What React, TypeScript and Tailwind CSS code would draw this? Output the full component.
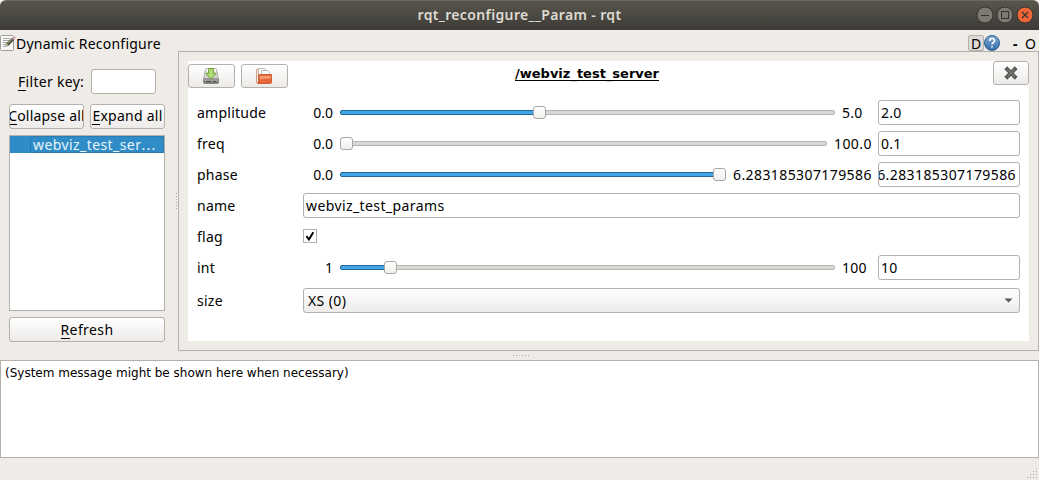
import React from "react";

const buttonFace =
  "border border-[#b4b1ac] rounded-[3px] bg-linear-to-b from-white to-[#edebe9]";

function Mnemonic({ text }: { text: string }) {
  return (
    <>
      <span className="inline-block h-[19px] border-b border-black leading-[20px]">{text[0]}</span>
      {text.slice(1)}
    </>
  );
}

function Field({ value, className = "" }: { value: string; className?: string }) {
  return (
    <div
      className={`flex h-[25px] items-center overflow-hidden rounded-[3px] border border-[#b4b1ac] bg-white whitespace-nowrap ${className}`}
    >
      {value}
    </div>
  );
}

function Slider({ percent }: { percent: number }) {
  return (
    <div className="relative flex h-[13px] min-w-0 flex-1 items-center">
      <div className="h-[5px] w-full rounded-[2px] border border-[#b6b4b1] bg-[#dad8d5]" />
      <div
        className="absolute top-[4px] left-0 h-[5px] rounded-[2px] border border-[#206b9d] bg-[#44a5e5]"
        style={{ width: `calc((100% - 13px) * ${percent / 100} + 6px)` }}
      />
      <div
        className="absolute top-0 h-[13px] w-[13px] rounded-[3px] border border-[#aaa7a3] bg-linear-to-b from-white to-[#f1efed]"
        style={{ left: `calc((100% - 13px) * ${percent / 100})` }}
      />
    </div>
  );
}

type SliderParam = { name: string; min: string; max: string; value: string; percent: number; maxClass: string; fieldClass: string };

function SliderRow({ p }: { p: SliderParam }) {
  return (
    <div className="flex h-[31px] items-center">
      <div className="w-[106px]">{p.name}</div>
      <div className="mr-[7px] w-[30px] text-right tracking-normal">{p.min}</div>
      <Slider percent={p.percent} />
      <div className={`mr-[6px] ml-[7px] whitespace-nowrap ${p.maxClass}`}>{p.max}</div>
      <Field value={p.value} className={`w-[142px] ${p.fieldClass}`} />
    </div>
  );
}

const floats: SliderParam[] = [
  { name: "amplitude", min: "0.0", max: "5.0", value: "2.0", percent: 40, maxClass: "w-[30px]", fieldClass: "pl-[2px]" },
  { name: "freq", min: "0.0", max: "100.0", value: "0.1", percent: 0, maxClass: "w-[38px] tracking-[0.4px]", fieldClass: "pl-[2px]" },
  { name: "phase", min: "0.0", max: "6.283185307179586", value: "6.283185307179586", percent: 100, maxClass: "w-[139px] tracking-[0.41px]", fieldClass: "justify-end pr-[3px] tracking-[0.41px]" },
];

function NotesIcon() {
  return (
    <svg width="16" height="16" viewBox="0 0 16 16">
      <rect x="0.5" y="0.5" width="13" height="15" rx="1" fill="#f7f7f5" stroke="#a09e9a" />
      <path d="M3 3.500h7M3 5.500h6M3 7.500h5M3 9.500h3M3 11.500h2" stroke="#a8a8a6" />
      <path d="M5.300 11.700l1-3.200 5.700-5.700 2.200 2.200-5.700 5.700z" fill="#4a4a46" />
      <path d="M5.600 11.300l.9-2.700 1.700 1.700z" fill="#e8d9a8" />
      <path d="M7.600 8.700l5-5" stroke="#b9b56a" />
      <path d="M12 3l1.200-1.300q1-.8 1.900 0t.1 1.900L14 5z" fill="#d59bbb" />
    </svg>
  );
}

function SaveIcon() {
  return (
    <svg width="16" height="16" viewBox="0 0 16 16">
      <defs>
        <linearGradient id="drive" x1="0" y1="0" x2="0" y2="1">
          <stop offset="0" stopColor="#fafaf9" />
          <stop offset="1" stopColor="#c8c8c6" />
        </linearGradient>
        <linearGradient id="driveBase" x1="0" y1="0" x2="0" y2="1">
          <stop offset="0" stopColor="#b5b6b3" />
          <stop offset="1" stopColor="#6d6e6b" />
        </linearGradient>
      </defs>
      <path d="M2.500 1.500q.2-1 1-1h9q.8 0 1 1l1.800 9.500H.7z" fill="url(#drive)" stroke="#9fa09d" strokeWidth=".8" />
      <path d="M.5 11h15v3.500q0 1-1 1h-13q-1 0-1-1z" fill="url(#driveBase)" stroke="#777875" strokeWidth=".8" />
      <path d="M3 13.500h5M10 13.500h3" stroke="#4e4f4c" />
      <path d="M5.700.5h4.600v4.800h3L8 11 2.700 5.300h3z" fill="#b4dc78" stroke="#669a22" strokeWidth=".9" />
    </svg>
  );
}

function FolderIcon() {
  return (
    <svg width="16" height="16" viewBox="0 0 16 16">
      <path d="M.5 14.500V2q0-.8.8-.8H3v13.300z" fill="#f8e6df" stroke="#cc8a72" strokeWidth=".8" />
      <path d="M2.500 13V.5h5.800l1.700 1.700V13z" fill="#fff" stroke="#a9a6a2" strokeWidth=".8" />
      <path d="M5.500 13V2.500h5.800L13.500 4.700V13z" fill="#fff" stroke="#a9a6a2" strokeWidth=".8" />
      <path d="M3.500 6.500h12V14.500q0 1-1 1H1.500q1.200-.3 1.200-1.500V7.300q0-.8.8-.8z" fill="#e9683a" stroke="#c8481c" strokeWidth=".8" />
      <path d="M3.700 8h11.200V10.500q-6 0-11.200 1z" fill="#f39a74" />
    </svg>
  );
}

function HelpIcon() {
  return (
    <span className="flex h-4 w-4 items-center justify-center rounded-full border border-[#295d8c] bg-linear-to-b from-[#7dabd6] to-[#3570a8]">
      <svg width="14" height="14" viewBox="0 0 14 14" fill="none" stroke="#fff" strokeWidth="1.6">
        <path d="M4.700 5q0-2.500 2.400-2.500T9.500 4.700q0 1.200-1.300 2Q7 7.400 7 8.500M7 9.900v1.700" />
      </svg>
    </span>
  );
}

function TitleBar() {
  return (
    <div className="bg-[#f6f5f3]">
      <div className="relative flex h-[30px] items-center justify-center rounded-t-[6px] border-t border-[#6a675c] bg-linear-to-b from-[#58564c] to-[#3c3b37] pb-px">
        <span className="font-['Noto_Sans',sans-serif] text-[14px] leading-none font-semibold tracking-[0.37px] text-[#dfdbd2]">
          rqt_reconfigure__Param - rqt
        </span>
        <svg className="absolute top-[4px] right-[4px]" width="60" height="20" viewBox="0 0 60 20">
          <g stroke="#34332f">
            <circle cx="10" cy="10" r="8" fill="#7c7a73" />
            <circle cx="30" cy="10" r="8" fill="#7c7a73" />
            <circle cx="50" cy="10" r="8" fill="#ee6538" />
          </g>
          <g fill="none" stroke="#34332f">
            <path d="M6 10.500h8" />
            <rect x="26.500" y="6.500" width="7" height="7" />
            <path d="M47 7l6 6M53 7l-6 6" strokeWidth="1.200" />
          </g>
        </svg>
      </div>
    </div>
  );
}

function Sidebar() {
  return (
    <div className="flex w-[178px] shrink-0 items-center justify-between self-stretch">
      <div className="ml-[9px] flex w-[156px] flex-col self-stretch pt-[18px] whitespace-nowrap">
        <div className="flex items-center justify-between pr-[9px] pl-[9px]">
          <span className="tracking-[0.3px]"><Mnemonic text="Filter key:" /></span>
          <Field value="" className="w-[65px]" />
        </div>
        <div className="mt-[10px] flex gap-[6px]">
          <div className={`flex h-[25px] w-[75px] items-center justify-center overflow-hidden pb-px ${buttonFace}`}>
            <span className="tracking-[0.2px]"><Mnemonic text="Collapse all" /></span>
          </div>
          <div className={`flex h-[25px] w-[75px] items-center justify-center overflow-hidden pb-px ${buttonFace}`}>
            <span className="tracking-[0.25px]"><Mnemonic text="Expand all" /></span>
          </div>
        </div>
        <div className="mt-[6px] h-[176px] border border-[#b4b1ac] bg-white">
          <div className="flex h-[17px] bg-[#308cc6] pl-[20px] text-[#e8f4fb]">
            <div className="flex flex-1 items-center rounded-[1px] border border-[#2a7bae] pl-[2px] leading-none">
              <span className="tracking-[0.42px]">webviz_test_ser</span>
              <span className="tracking-[1.3px]">...</span>
            </div>
          </div>
        </div>
        <div className={`mt-[6px] flex h-[25px] items-center justify-center ${buttonFace}`}>
          <span className="tracking-[0.4px]"><Mnemonic text="Refresh" /></span>
        </div>
      </div>
      <div className="mr-[1px] h-[16px] w-px bg-[repeating-linear-gradient(to_bottom,#aaa7a3_0_1px,transparent_1px_3px)]" />
    </div>
  );
}

function ParamPanel() {
  return (
    <div className="flex-1 border border-[#b4b1ac] p-[9px]">
      <div className="h-[280px] bg-white">
        <div className="flex h-[36px] items-start">
          <div className={`mt-[3px] flex h-[24px] w-[47px] items-center justify-center pr-px ${buttonFace}`}><SaveIcon /></div>
          <div className={`mt-[3px] ml-[6px] flex h-[24px] w-[47px] items-center justify-center pr-px ${buttonFace}`}><FolderIcon /></div>
          <div className="ml-[227px] flex flex-1 pt-[5px]">
            <span className="h-[15px] border-b border-black font-['DejaVu_Sans',sans-serif] text-[13px] leading-[15px] font-bold">
              /webviz_test_server
            </span>
          </div>
          <div className={`flex h-[24px] w-[36px] items-center justify-center ${buttonFace}`}>
            <svg width="14" height="14" viewBox="0 0 14 14">
              <path d="M3.200 3.200l7.600 7.600M10.800 3.200l-7.600 7.600" stroke="#555753" strokeWidth="4" strokeLinecap="square" strokeLinejoin="round" />
              <path d="M3.200 3.200l7.600 7.600M10.800 3.200l-7.600 7.600" stroke="#777975" strokeWidth="1.500" />
            </svg>
          </div>
        </div>
        <div className="pr-[9px] pl-[9px] tracking-[0.25px]">
          {floats.map((p) => <SliderRow key={p.name} p={p} />)}
          <div className="flex h-[31px] items-center">
            <div className="w-[106px]">name</div>
            <Field value="webviz_test_params" className="flex-1 pl-[2px] tracking-[0.4px]" />
          </div>
          <div className="flex h-[31px] items-center">
            <div className="w-[106px]">flag</div>
            <div className="mb-px h-[14px] w-[14px] border border-[#b4b1ac] bg-white">
              <svg width="12" height="12" viewBox="0 0 12 12">
                <path d="M2.500 6.200l2.400 3.300L9.300 2.300" fill="none" stroke="#000" strokeWidth="2" />
              </svg>
            </div>
          </div>
          <SliderRow p={{ name: "int", min: "1", max: "100", value: "10", percent: 9.09, maxClass: "w-[30px]", fieldClass: "pl-[2px]" }} />
          <div className="mt-[2px] flex h-[31px] items-center">
            <div className="w-[106px]">size</div>
            <div className={`flex h-[25px] flex-1 items-center justify-between pr-[6px] pl-[4px] ${buttonFace}`}>
              <span className="tracking-[0.4px]">XS (0)</span>
              <svg width="9" height="5" viewBox="0 0 9 5"><path d="M0.500.500h8L4.500 4.500z" fill="#5a5856" /></svg>
            </div>
          </div>
        </div>
      </div>
    </div>
  );
}

function SizeGrip() {
  const dots = [[9, 0], [6, 3], [9, 3], [3, 6], [6, 6], [9, 6], [0, 9], [3, 9], [6, 9], [9, 9]];
  return (
    <svg width="10" height="10" viewBox="0 0 10 10">
      {dots.map(([x, y]) => <rect key={`${x}-${y}`} x={x} y={y} width="1" height="1" fill="#aaa7a3" />)}
    </svg>
  );
}

export default function App() {
  return (
    <div className="flex h-[480px] w-[1039px] flex-col overflow-hidden bg-[#efebe7] font-['Noto_Sans',sans-serif] text-[14px] leading-[20px] text-black">
      <TitleBar />
      <div className="flex h-[21px] items-center pt-[5px]">
        <NotesIcon />
        <span className="flex-1 pt-px tracking-[0.23px]">Dynamic Reconfigure</span>
        <span className="flex h-[16px] w-[16px] items-center justify-center rounded-[2px] border border-[#b4b1ac] bg-[#dedad6] pt-px leading-none">D</span>
        <HelpIcon />
        <span className="ml-[13px] w-[12px] pt-px font-bold">-</span>
        <span className="w-[14px] pt-px">O</span>
      </div>
      <div className="flex h-[300px]">
        <Sidebar />
        <ParamPanel />
      </div>
      <div className="flex h-[9px] items-center pl-[513px]">
        <div className="h-px w-[16px] bg-[repeating-linear-gradient(to_right,#aaa7a3_0_1px,transparent_1px_3px)]" />
      </div>
      <div className="h-[98px] border border-[#b4b1ac] bg-white pt-[2px] pl-[4px] font-['DejaVu_Sans',sans-serif] text-[12px]">
        (System message might be shown here when necessary)
      </div>
      <div className="flex flex-1 items-end justify-end pr-[2px] pb-[2px]"><SizeGrip /></div>
    </div>
  );
}
